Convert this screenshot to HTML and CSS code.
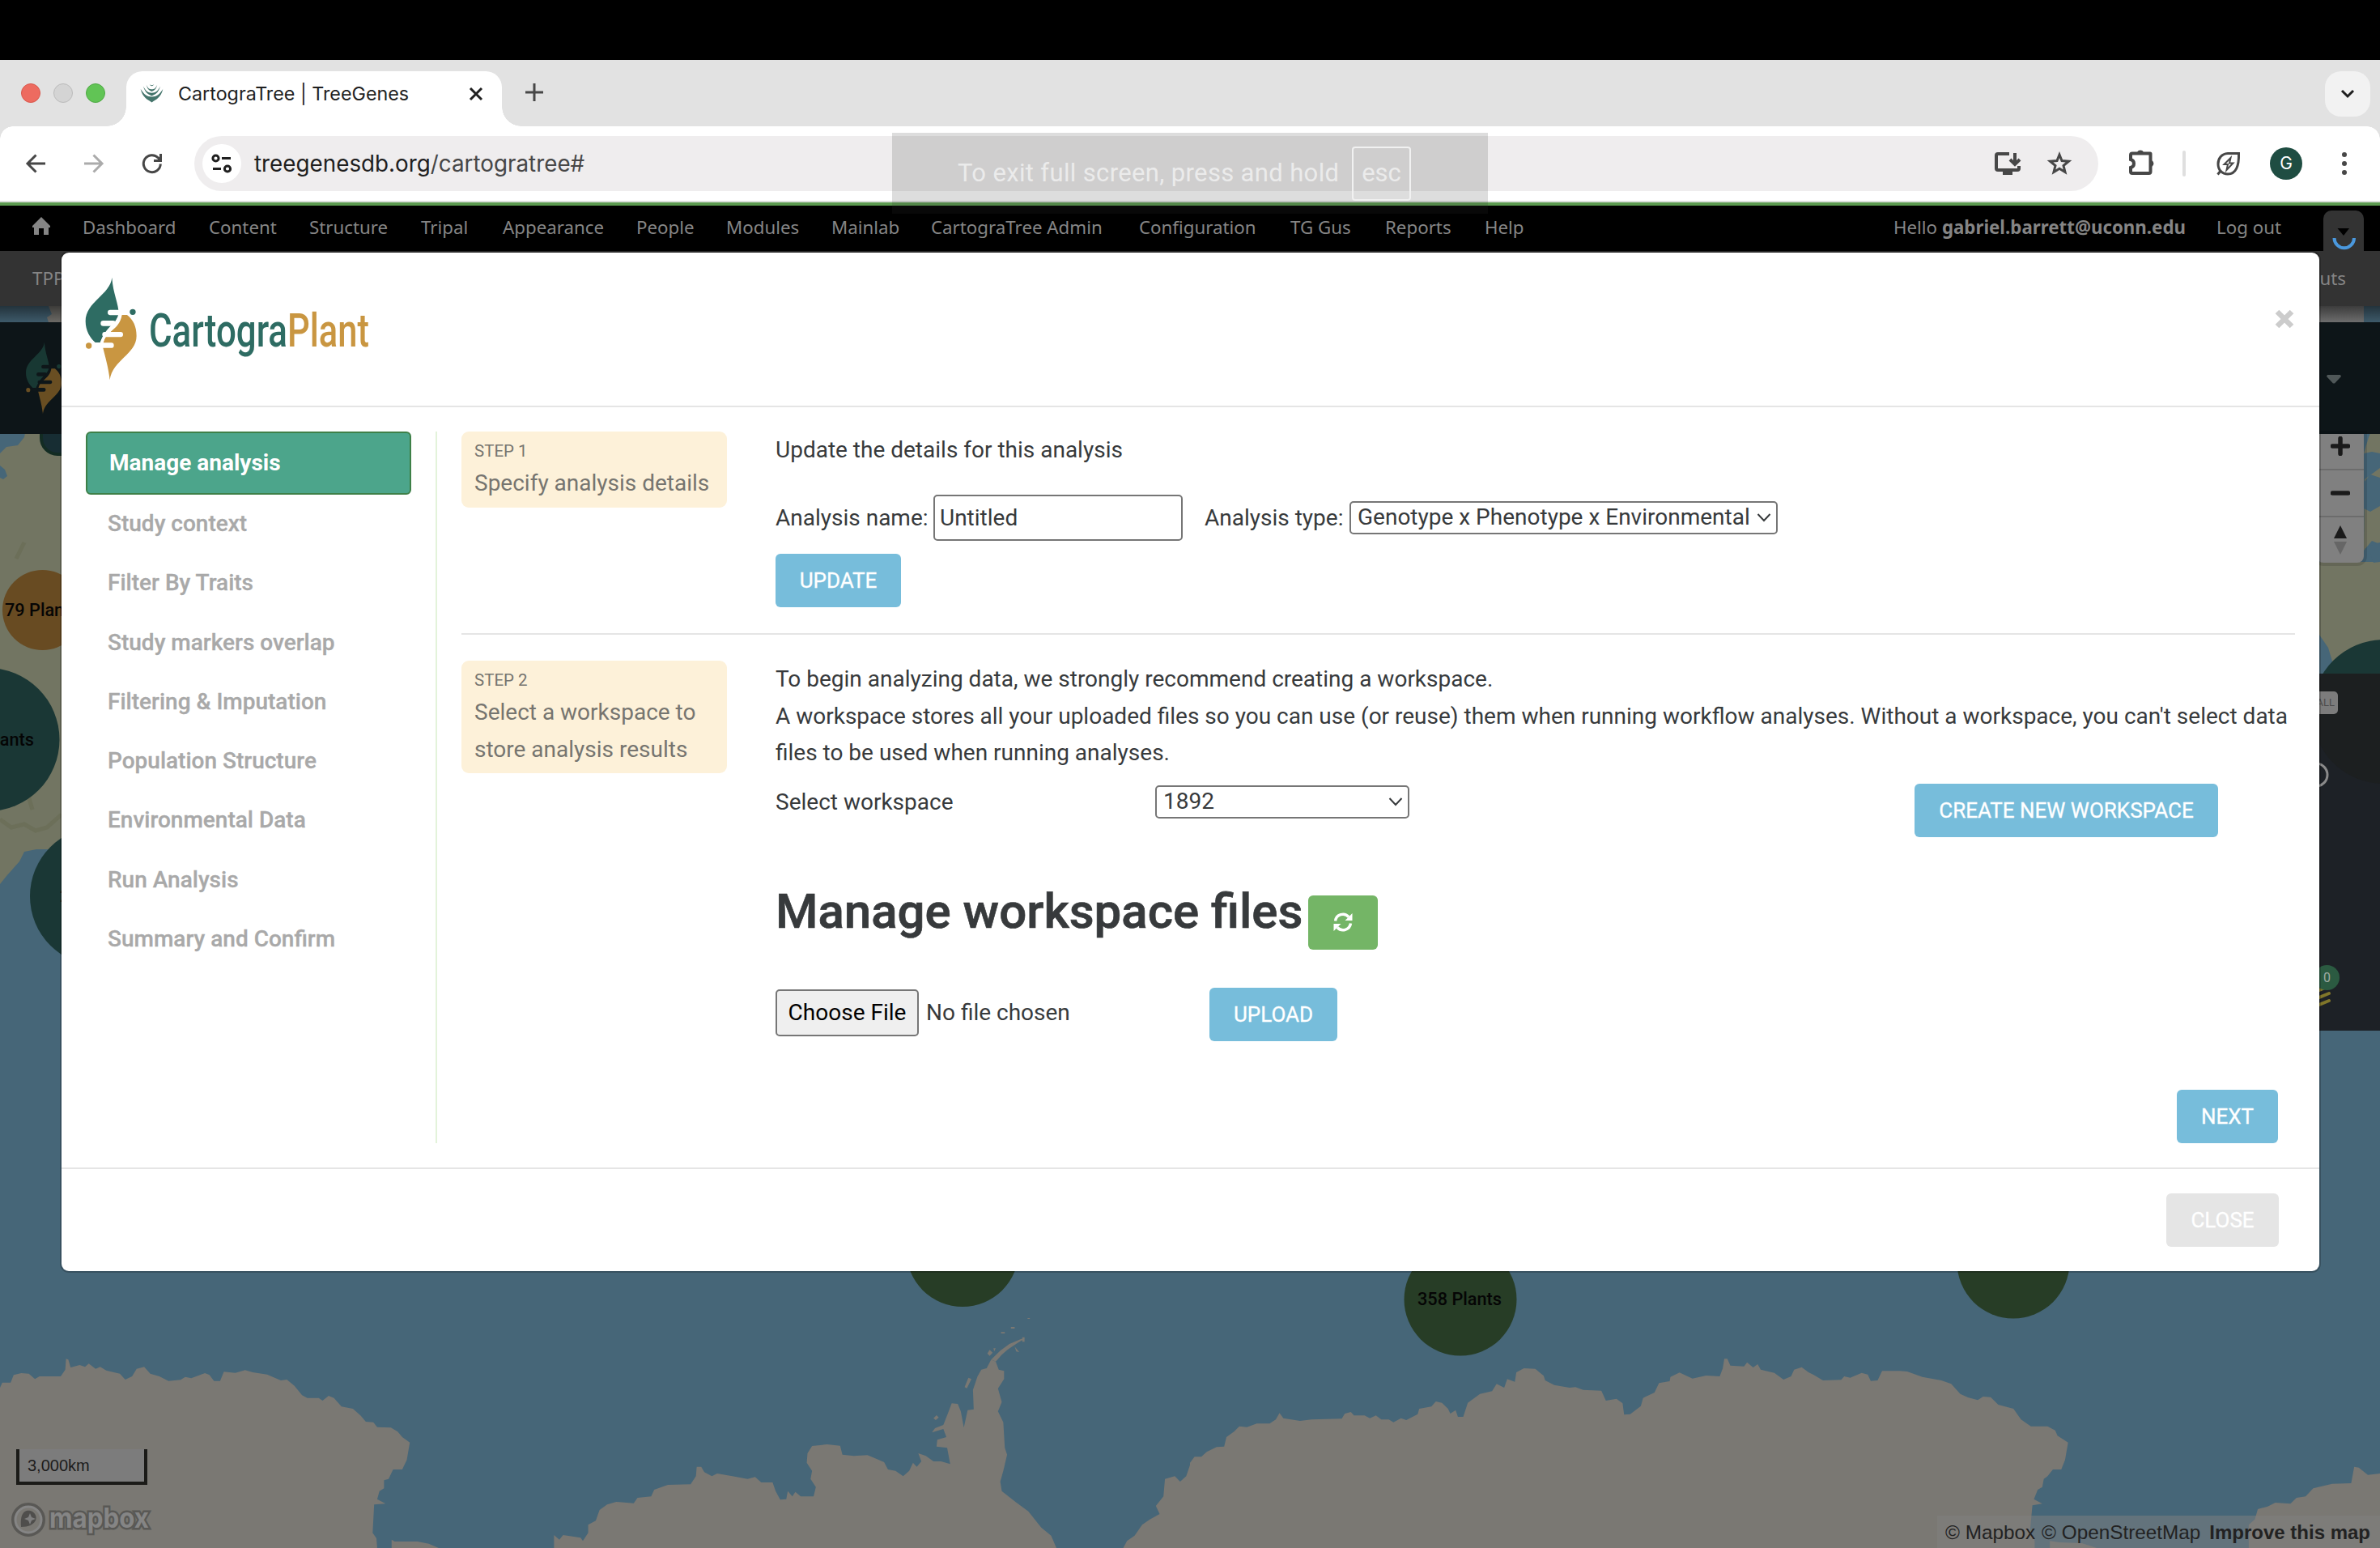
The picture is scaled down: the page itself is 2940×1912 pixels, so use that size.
FILE: index.html
```html
<!DOCTYPE html>
<html lang="en">
<head>
<meta charset="utf-8">
<title>CartograTree | TreeGenes</title>
<link rel="stylesheet" href="styles.css">
</head>
<body>
<svg class="defs" width="0" height="0">
  <symbol id="leaf" viewBox="70 30 205 400">
    <path class="leaf-top" d="M176 38C170 102 78 128 78 200C78 235 95 262 114 279H132C140 258 150 240 170 219C184 208 194 194 202 178C200 130 180 100 176 38Z"/>
    <path class="leaf-bottom" d="M213 177H232C255 195 267 220 267 255C267 322 178 344 168 418C163 370 150 330 143 299C142 275 150 256 170 240C195 220 208 205 213 177Z"/>
    <g class="leaf-cut">
      <rect x="160" y="158" width="55" height="19.500" rx="9.500"/>
      <rect x="134" y="198" width="56" height="20.500" rx="10"/>
      <rect x="140" y="240" width="77" height="18.500" rx="9"/>
      <rect x="114" y="280" width="69" height="19.500" rx="9.500"/>
      <path d="M206 170Q200 200 172 232Q140 255 135 296" fill="none" stroke="currentColor" stroke-width="9"/>
    </g>
    <circle class="leaf-top" cx="253" cy="166" r="11"/>
    <circle class="leaf-bottom" cx="90" cy="291" r="11"/>
  </symbol>
</svg>

<div class="screen">
  <div class="menubar"></div>

  <div class="tabstrip">
    <div class="lights"><i class="red"></i><i class="grey"></i><i class="green"></i></div>
    <div class="tab">
      <svg class="favicon" viewBox="0 0 90 72"><path d="M2 20C16 42 26 50 45 50S74 42 88 20C80 54 62 60 45 72C28 60 10 54 2 20Z"/><path d="M12 10C24 30 30 35 45 35S66 30 78 10C68 40 58 40 45 47C32 40 22 40 12 10Z"/><path d="M24 4C32 20 36 21 45 21S58 20 66 4C60 26 54 24 45 30C36 24 30 26 24 4Z"/><path d="M36 2Q45 16 54 2Q45 10 36 2Z"/></svg>
      <span class="tab-title">CartograTree | TreeGenes</span>
      <svg class="tab-close" viewBox="0 0 18 18"><path d="M2 2L16 16M16 2L2 16"/></svg>
    </div>
    <svg class="new-tab" viewBox="0 0 22 22"><path d="M11 0V22M0 11H22"/></svg>
    <div class="tab-search"><svg viewBox="0 0 18 12"><path d="M2 2L9 9L16 2"/></svg></div>
  </div>

  <div class="toolbar">
    <svg class="tool" viewBox="0 0 24 24"><path d="M24 12H2M12.500 1.500L2 12L12.500 22.500"/></svg>
    <svg class="tool off" viewBox="0 0 24 24"><path d="M0 12H22M11.500 1.500L22 12L11.500 22.500"/></svg>
    <svg class="tool" viewBox="0 0 24 24"><path d="M22.300 12.500A10.500 10.500 0 1 1 19.500 5L22 8M22.500 0V8.500H14"/></svg>
    <div class="omnibox">
      <div class="site-chip"><svg viewBox="0 0 26 24"><circle cx="5.500" cy="5.500" r="3.600"/><path d="M13 5.500H24M2 18.500H12"/><circle cx="20" cy="18.500" r="3.600"/></svg></div>
      <span class="url">treegenesdb.org<span>/cartogratree#</span></span>
      <svg class="ic install" viewBox="0 0 32 29"><path d="M18 2H4Q2 2 2 4V20Q2 22 4 22H28Q30 22 30 20V17"/><path d="M10 25H22" stroke-width="6"/><path d="M25 1V14M19 9L25 15L31 9"/></svg>
      <svg class="ic star" viewBox="0 0 30 30"><path d="M15 4L18 11.500L26.500 12.200L20 17.500L22 25.500L15 21.200L8 25.500L10 17.500L3.500 12.200L12 11.500Z"/></svg>
    </div>
    <svg class="ic puzzle" viewBox="0 0 32 32"><path d="M4 5.500H26Q26.500 5.500 26.500 6V28Q26.500 30 24.500 30H4Q2 30 2 28V23Q6 22 6 18T2 13V7.500Q2 5.500 4 5.500Z"/><path class="solid" d="M10 4A4.500 4.500 0 0 1 18 4ZM28 14A4.500 4.500 0 0 1 28 22Z"/></svg>
    <div class="sep"></div>
    <svg class="ic saver" viewBox="0 0 30 30"><path d="M27.500 2.500H14C6 3 2 9 2 15.500C2 23 7 28 14 28C24 28 28 18 27.500 2.500ZM6 23L1.500 28.500"/><path d="M17.500 8L9.500 16H14L12.500 23L20.500 14.500H16Z" stroke-width="2"/></svg>
    <div class="avatar">G</div>
    <div class="dots"><i></i><i></i><i></i></div>
  </div>

  <div class="page">
    <svg class="map" viewBox="0 254 2940 1658" width="2940" height="1658">
      <rect class="sea" y="254" width="2940" height="1658"/>
      <path class="green-land" d="M0 560L8 552L22 550L30 540L32 530H76V1049H45L30 1052L24 1064L8 1082L0 1092Z"/>
      <path class="sea" d="M0 575L6 580L9 588L4 592L0 590Z"/>
      <path class="ridge" d="M0 1012L14 1022L30 1018L44 1026L58 1022L76 1006M6 905Q20 930 40 1000M20 690L30 670"/>
      <path class="grey-land" d="M60 378L64 388L58 392L60 398H76V378Z"/>
      <path class="green-land" d="M2920 560L2926 540L2930 530H2940V560L2930 558ZM2921 592L2940 578V672L2930 668L2920 680ZM2865 694H2940V820H2882L2876 800L2865 784Z"/>
      <path class="sea" d="M2920 596L2928 586L2940 590V625L2928 632L2920 628ZM2921 678L2932 672L2940 670V694L2932 695L2928 684Z"/>
      <g class="grey-land">
        <g transform="translate(0 1540) scale(.9375 .33333)">
          <path d="M0 522L3 503 14 503 18 475 28 468 38 470 46 490 52 480 80 480 86 455 87 415 90 418 93 447 105 438 112 445 117 433 126 452 132 445 140 458 158 470 165 492 174 480 180 452 190 445 198 470 210 480 222 497 238 493 244 482 252 487 270 468 276 475 282 497 290 497 295 463 310 467 323 457 333 465 352 473 370 495 378 492 388 515 398 550 405 560 420 560 425 570 433 552 440 560 450 592 465 600 475 625 482 648 492 650 497 668 515 670 524 685 530 705 540 725 536 790 530 825 518 825 512 860 506 865 506 895 500 905 497 935 508 952 493 955 491 1060 496 1080 497 1116 0 1116Z"/>
          <path d="M516 1085L520 1092 550 1092 565 1100 578 1116 516 1116Z"/>
          <path d="M730 1116V1068L737 1085 742 1068 765 1078 768 1090 775 1060 775 1030 785 1015 790 975 800 955 812 945 835 950 840 930 858 925 862 900 880 882 910 880 917 850 918 815 924 815 928 835 938 850 945 840 965 850 985 860 995 853 1003 873 1018 873 1022 905 1028 937 1036 935 1038 905 1044 925 1048 908 1055 925 1072 925 1075 890 1068 860 1070 830 1063 800 1064 765 1070 738 1090 732 1107 737 1110 770 1125 775 1143 772 1152 782 1165 798 1170 825 1180 830 1190 850 1198 830 1203 800 1208 815 1214 795 1210 765 1220 775 1230 795 1240 795 1252 805 1248 745 1234 740 1235 715 1247 705 1243 675 1228 688 1232 672 1243 660 1250 610 1254 580 1262 582 1266 610 1270 670 1275 605 1283 602 1282 530 1288 480 1293 455 1300 450 1306 418 1312 425 1316 455 1323 460 1323 490 1315 525 1320 575 1315 610 1322 650 1324 745 1327 770 1322 830 1318 870 1320 905 1338 945 1355 980 1372 1040 1385 1070 1392 1116Z"/>
          <path d="M1306 418L1318 385 1330 360 1345 342 1351 338 1340 358 1328 380 1320 400 1312 425ZM1301 395L1304 382 1308 392 1304 404ZM1309 376L1312 376 1310 388ZM1337 370L1343 390 1339 388ZM1271 520L1276 485 1280 490 1274 524ZM1230 635L1234 624 1237 632 1233 642ZM1319 316H1324V321H1319ZM1332 297H1337V303H1332ZM1347 335H1350V352H1347ZM1354 264H1357V267H1354Z"/>
          <path d="M1480 1116L1485 1090 1495 1070 1505 1030 1515 1010 1528 990 1523 960 1533 925 1535 860 1548 850 1555 870 1563 850 1569 800V1116Z"/>
        </g>
        <g transform="translate(1470 1540) scale(.9375 .33333)">
          <path d="M0 1116V800L6 778 15 778 22 760 35 742 45 740 48 705 58 685 65 665 75 668 88 655 105 655 113 640 118 616 123 635 145 645 160 640 200 637 204 618 212 612 216 625 230 625 237 635 245 625 252 640 262 640 268 650 278 635 285 642 300 620 302 600 318 592 324 573 332 578 340 600 343 618 350 605 353 630 360 630 366 578 382 545 398 535 404 508 414 522 418 490 428 500 430 465 440 450 455 452 466 478 468 495 480 512 500 522 508 520 518 530 542 533 548 570 562 563 570 580 572 622 580 620 594 590 597 560 612 540 618 505 632 498 633 482 645 466 662 488 680 477 698 480 702 450 704 415 708 415 712 440 730 443 734 428 742 447 748 435 752 455 770 467 782 492 792 480 796 455 806 446 815 465 822 475 834 495 858 493 862 480 870 485 885 467 893 473 897 497 906 495 912 460 935 460 945 462 965 482 990 495 1003 508 1015 545 1025 558 1038 568 1045 555 1055 557 1065 585 1085 600 1095 640 1108 665 1130 665 1140 680 1143 700 1157 725 1153 790 1148 825 1137 825 1130 850 1125 860 1123 890 1117 900 1112 935 1123 952 1110 958 1107 1050 1113 1090 1113 1116Z"/>
          <path d="M1395 1116V1030L1403 1010 1407 972 1420 962 1430 948 1450 952 1458 930 1470 925 1480 895 1505 878 1530 876 1534 815 1540 818 1552 845 1568 840V1116ZM1133 1090L1145 1095 1175 1098 1195 1116H1133Z"/>
        </g>
      </g>
      <g class="pin-green"><circle cx="1189" cy="1544.500" r="69.500"/><circle cx="1804" cy="1605" r="69.500"/><circle cx="2487" cy="1559" r="69.500"/></g>
      <circle class="pin-gold" cx="52.500" cy="753.500" r="49.500"/>
      <g class="pin-teal"><circle cx="-15" cy="913.500" r="88.500"/><circle cx="123" cy="1107" r="86"/><circle cx="2945" cy="879" r="89"/></g>
      <rect class="pin-box" x="51" y="500" width="80" height="61" rx="20"/>
      <g class="pin-label"><text x="6" y="761">79 Plants</text><text x="42" y="921" text-anchor="end">254 Plants</text><text x="74" y="1114">2k</text><text x="1803" y="1612" text-anchor="middle">358 Plants</text></g>
    </svg>

    <div class="admin">
      <svg class="home" viewBox="0 0 22 22"><path d="M11 0L22 11V13H20V22H14V14H8V22H2V13H0V11Z"/></svg>
      <div class="admin-menu"><span>Dashboard</span><span>Content</span><span>Structure</span><span>Tripal</span><span>Appearance</span><span>People</span><span>Modules</span><span>Mainlab</span><span>CartograTree Admin</span><span>Configuration</span><span>TG Gus</span><span>Reports</span><span>Help</span></div>
      <div class="user"><span>Hello <b>gabriel.barrett@uconn.edu</b></span><span>Log out</span></div>
      <div class="drawer"><svg viewBox="0 0 50 50"><path d="M17.500 22H32L25 31Z" fill="#000"/><path d="M13.500 34A12.200 12.200 0 0 0 38 34" fill="none" stroke="#4a98dd" stroke-width="4"/></svg></div>
    </div>
    <div class="shortcuts"><span>TPPS</span><span>Edit shortcuts</span></div>
    <div class="strip"><i></i></div>
    <div class="sitenav">
      <svg class="nav-logo"><use href="#leaf"/></svg>
      <svg class="caret" viewBox="0 0 18 11"><path d="M1 0H17L18 2L10 10.500H8L0 2Z"/></svg>
    </div>

    <div class="zoomer"><div><svg viewBox="0 0 24 24"><path d="M12 2.500V21.500M2.500 12H21.500"/></svg></div><div><svg viewBox="0 0 24 24"><path d="M2.500 12H21.500"/></svg></div><div><svg class="compass" viewBox="0 0 16 36"><path d="M8 0L16 16H0Z" fill="#1a1a1a"/><path d="M0 20H16L8 36Z" fill="#666"/></svg></div></div>
    <div class="side-panel"><div class="all">ALL</div><svg class="side-art" viewBox="0 0 75 441"><circle cx="80" cy="47" r="89" fill="#1c1f20"/><circle cx="-4" cy="125" r="14" fill="none" stroke="#8a8a8a" stroke-width="3"/><path d="M0 391L12 386M0 400L12 395M0 409L12 404" stroke="#80762a" stroke-width="4" stroke-linecap="round"/></svg><div class="count">0</div></div>

    <div class="scale">3,000km</div>
    <svg class="mapbox" viewBox="0 0 180 44"><circle cx="21" cy="22" r="19" fill="none" stroke="#595855" stroke-width="4"/><circle cx="21" cy="22" r="16" fill="none" stroke="#858585" stroke-width="3"/><path d="M12 31C10 10 20 9 26 12C35 18 31 31 12 31Z" fill="#4f4e4c"/><path d="M23 14L25 19L30 21L25 23L23 28L21 23L16 21L21 19Z" fill="#7f7f7f"/><text x="47" y="32" textLength="123" lengthAdjust="spacingAndGlyphs">mapbox</text></svg>
    <div class="attribution"><span>© Mapbox</span> <span>© OpenStreetMap</span> <b>Improve this map</b></div>

    <div class="modal">
      <div class="modal-head">
        <div class="brand">
          <svg class="brand-leaf"><use href="#leaf"/></svg>
          <svg class="brand-name" viewBox="0 0 280 70"><text x="0" y="50" textLength="171" lengthAdjust="spacingAndGlyphs" fill="#2e6c63">Cartogra</text><text x="171" y="50" textLength="101" lengthAdjust="spacingAndGlyphs" fill="#c99641">Plant</text></svg>
        </div>
        <svg class="close-x" viewBox="0 0 24 24"><path d="M3 3L21 21M21 3L3 21"/></svg>
      </div>
      <div class="modal-body">
        <div class="steps">
          <div class="active">Manage analysis</div>
          <div>Study context</div><div>Filter By Traits</div><div>Study markers overlap</div><div>Filtering &amp; Imputation</div><div>Population Structure</div><div>Environmental Data</div><div>Run Analysis</div><div>Summary and Confirm</div>
        </div>
        <div class="content">
          <div class="row first">
            <div class="card"><small>STEP 1</small>Specify analysis details</div>
            <div>
              <p>Update the details for this analysis</p>
              <div class="form"><span>Analysis name:</span><div class="input">Untitled</div><span class="type">Analysis type:</span><div class="select wide"><span>Genotype x Phenotype x Environmental</span><svg viewBox="0 0 18 12"><path d="M1.500 2L9 10L16.500 2"/></svg></div></div>
              <div class="btn update">UPDATE</div>
            </div>
          </div>
          <div class="row second">
            <div class="card"><small>STEP 2</small>Select a workspace to<br>store analysis results</div>
            <div>
              <p>To begin analyzing data, we strongly recommend creating a workspace.<br>A workspace stores all your uploaded files so you can use (or reuse) them when running workflow analyses. Without a workspace, you can't select data<br>files to be used when running analyses.</p>
              <div class="pick"><span>Select workspace</span><div class="select"><span>1892</span><svg viewBox="0 0 18 12"><path d="M1.500 2L9 10L16.500 2"/></svg></div><div class="btn create">CREATE NEW WORKSPACE</div></div>
              <div class="files"><h1>Manage workspace files</h1><div class="btn refresh"><svg viewBox="0 0 24 24"><path d="M2.500 10.500A9.500 9.500 0 0 1 19 5.500M21.500 13.500A9.500 9.500 0 0 1 5 18.500" fill="none" stroke="#fff" stroke-width="3.400"/><path d="M23.500 1V10H14.500ZM.5 23V14H9.500Z" fill="#fff"/></svg></div></div>
              <div class="upload"><div class="choose">Choose File</div><span>No file chosen</span><div class="btn">UPLOAD</div></div>
              <div class="next"><div class="btn">NEXT</div></div>
            </div>
          </div>
        </div>
      </div>
      <div class="modal-foot"><div class="btn disabled">CLOSE</div></div>
    </div>
  </div>

  <div class="toast"><span>To exit full screen, press and hold</span><kbd>esc</kbd></div>
</div>
</body>
</html>
```
FILE: styles.css
```css
* { box-sizing: border-box; }
body { margin: 0; background: #000; }
svg { display: block; flex: none; }
.defs { position: absolute; }
.screen { position: relative; width: 2940px; height: 1912px; overflow: hidden; display: flex; flex-direction: column; font-family: Inter, "Liberation Sans", sans-serif; }
.menubar { height: 74px; background: #000; }

/* browser chrome */
.tabstrip { height: 82px; background: #e2e2e2; display: flex; padding: 14px 12px 0 26px; }
.lights { display: flex; gap: 16px; margin-top: 15px; width: 130px; }
.lights i { width: 24px; height: 24px; border-radius: 50%; border: 1px solid #d9574c; background: #ed6b60; }
.lights .grey { background: #d4d4d4; border-color: #bbb; }
.lights .green { background: #61c455; border-color: #4fa945; }
.tab { position: relative; width: 464px; height: 68px; background: #fff; border-radius: 20px 20px 0 0; display: flex; align-items: flex-start; padding: 14px 23px 0 17px; }
.tab::before, .tab::after { content: ""; position: absolute; bottom: 0; width: 24px; height: 24px; }
.tab::before { left: -24px; background: radial-gradient(circle at 0 0, transparent 23.5px, #fff 24px); }
.tab::after { right: -24px; background: radial-gradient(circle at 100% 0, transparent 23.5px, #fff 24px); }
.favicon { width: 29px; height: 24px; margin-top: 1px; fill: #45756c; }
.tab-title { font-size: 23.300px; line-height: 28px; margin-left: 18px; color: #1f1f1f; white-space: nowrap; }
.tab-close { width: 18px; height: 18px; margin: 5px 0 0 auto; }
.tab-close path, .tab-search path { fill: none; stroke: #1f1f1f; stroke-width: 3; }
.new-tab { width: 22px; height: 22px; margin: 15px 0 0 29px; }
.new-tab path { stroke: #474747; stroke-width: 3; }
.tab-search { width: 56px; height: 56px; margin-left: auto; background: #f2f2f2; border-radius: 20px; display: grid; place-items: center; }
.tab-search svg { width: 18px; height: 12px; }
.toolbar { height: 94px; background: linear-gradient(#fff, #fff) 0 0 / 100% 92px no-repeat, #dcdfdc; display: flex; align-items: center; padding: 0 36px 2px 32px; position: relative; }
.toolbar::before, .toolbar::after { content: ""; position: absolute; top: 0; width: 16px; height: 16px; }
.toolbar::before { left: 0; background: radial-gradient(circle at 100% 100%, #fff 15.5px, #e2e2e2 16px); }
.toolbar::after { right: 0; background: radial-gradient(circle at 0 100%, #fff 15.5px, #e2e2e2 16px); }
.tool { width: 24px; height: 24px; margin-right: 48px; fill: none; stroke: #474747; stroke-width: 3; overflow: visible; }
.tool.off { stroke: #ababab; }
.tool:nth-child(3) { margin-right: 40px; }
.omnibox { width: 2352px; height: 68px; border-radius: 34px; background: #efedee; display: flex; align-items: center; padding: 0 33px 0 10px; }
.site-chip { width: 48px; height: 48px; border-radius: 50%; background: #fff; display: grid; place-items: center; }
.site-chip svg { width: 26px; height: 24px; fill: none; stroke: #1f1f1f; stroke-width: 3; }
.url { font-size: 27.800px; margin-left: 16px; color: #1f1f1f; margin-right: auto; }
.url span { color: #474747; }
.ic { fill: none; stroke: #474747; stroke-width: 4; overflow: visible; }
.ic .solid { fill: #474747; stroke: none; }
.install { width: 32px; height: 29px; margin-right: 33px; }
.star { width: 30px; height: 30px; stroke-width: 3; }
.puzzle { width: 32px; height: 32px; margin: 0 34px 0 38px; position: relative; top: -2px; }
.sep { width: 4px; height: 32px; border-radius: 2px; background: #dfdfdf; margin-right: 38px; }
.saver { width: 30px; height: 30px; margin-right: 36px; stroke-width: 3; }
.avatar { width: 40px; height: 40px; border-radius: 50%; background: #1f4d42; color: #fff; font-size: 21px; line-height: 40px; text-align: center; margin-right: 49px; }
.dots { display: flex; flex-direction: column; gap: 5px; }
.dots i { width: 6px; height: 6px; border-radius: 50%; background: #474747; }

.toast { position: absolute; left: 1102px; top: 164px; width: 736px; height: 100px; background: rgba(50, 50, 50, .165); color: #ebebeb; display: flex; align-items: center; padding: 0 0 0 81px; font: 31px Roboto, sans-serif; white-space: nowrap; }
.toast span { width: 487px; letter-spacing: .35px; margin-top: -2px; }
.toast kbd { width: 73px; height: 67px; border: 2px solid #f1f1f1; border-radius: 4px; font: 31px/62px Roboto, sans-serif; text-align: center; }

/* page behind the dialog */
.page { position: relative; flex: 1; overflow: hidden; border-top: 4px solid #5c9a50; color: #858585; }
.map { position: absolute; left: 0; top: 0; }
.sea { fill: #466678; }
.green-land { fill: #727562; }
.grey-land { fill: #7a7873; }
.ridge { fill: none; stroke: #65694f; stroke-width: 5; opacity: .5; }
.pin-green { fill: #273d26; }
.pin-gold { fill: #684b22; }
.pin-teal { fill: #1a3735; }
.pin-box { fill: #172d33; stroke: #132c23; stroke-width: 4; }
.pin-label { font: 500 21.700px Roboto, sans-serif; fill: #050505; }
.admin { position: relative; height: 56px; background: #000; display: flex; padding-left: 40px; font: 22.300px/53px "Noto Sans", sans-serif; white-space: nowrap; }
.home { width: 22px; height: 22px; fill: #858585; margin-top: 14px; }
.admin-menu { margin-left: 40px; display: grid; grid-template-columns: 156px 124px 138px 101px 165px 111px 130px 123px 257px 187px 117px 123px 80px; }
.user { display: grid; grid-template-columns: 399px 90px; margin-left: auto; }
.drawer { width: 50px; height: 50px; margin: 6px 20px 0 42px; background: #333; border-radius: 10px 10px 0 0; }
.shortcuts { position: relative; height: 68px; background: #333; display: flex; justify-content: space-between; padding: 0 42px 0 40px; font: 22.300px/68px "Noto Sans", sans-serif; }
.strip { position: relative; height: 20px; background: linear-gradient(rgba(0,0,0,.5), rgba(0,0,0,.12)); }
.strip i { display: block; width: 60px; height: 20px; margin-left: 2860px; background: linear-gradient(#3c3c3c, #6d6d6d); }
.sitenav { position: relative; height: 138px; background: #0d1518; color: #0d1518; display: flex; justify-content: space-between; padding: 23px 48px 0 30px; }
.nav-logo { width: 48px; height: 93px; overflow: visible; color: #1a2a30; filter: brightness(.52); }
.leaf-top { fill: #2e6c63; }
.leaf-bottom { fill: #c99641; }
.leaf-cut { fill: currentColor; }
.caret { width: 18px; height: 11px; margin-top: 42px; fill: #4f5758; }
.zoomer { position: absolute; left: 2862px; top: 282px; width: 58px; height: 159px; background: #808080; border-radius: 0 0 8px 8px; box-shadow: 0 0 0 4px rgba(0,0,0,.12); }
.zoomer div { height: 58px; border-bottom: 2px solid #6c6c6c; display: grid; place-items: center; }
.zoomer div:first-child { height: 45px; padding-bottom: 14px; }
.zoomer div:last-child { height: 56px; border: 0; }
.zoomer svg { width: 24px; height: 24px; stroke: #1a1a1a; stroke-width: 5.500; stroke-linecap: round; }
.zoomer .compass { width: 16px; height: 36px; stroke: none; }
.side-panel { position: absolute; left: 2865px; top: 578px; width: 75px; height: 441px; background: #1d2126; overflow: hidden; }
.side-art { width: 75px; height: 441px; }
.all { position: absolute; left: -22px; top: 22px; width: 45px; height: 28px; border-radius: 5px; background: #7c7c7c; color: #4d4d4d; font: 13px/28px Roboto, sans-serif; text-align: right; padding-right: 4px; }
.count { position: absolute; left: -6px; top: 360px; width: 31px; height: 31px; border-radius: 50%; background: #2b5a41; color: #a0aaa2; font: 16px/32px Roboto, sans-serif; text-align: center; }
.scale { position: absolute; left: 20px; top: 1536px; width: 162px; height: 44px; border: 4px solid #1b1b18; border-top: 0; background: #7c7c7c; color: #1c1c1c; font: 20px/40px "Liberation Sans", sans-serif; padding-left: 10px; }
.mapbox { position: absolute; left: 14px; top: 1601px; width: 180px; height: 44px; }
.mapbox text { font: 700 34px Inter, sans-serif; fill: #858585; stroke: #595855; stroke-width: 5; paint-order: stroke; }
.attribution { position: absolute; right: 0; bottom: 0; width: 547px; height: 40px; background: rgba(128, 128, 128, .5); color: #222; font: 24.300px/42px "Liberation Sans", sans-serif; padding-left: 10px; white-space: nowrap; display: flex; gap: 8px; }
.attribution b { margin-left: 3px; font-size: 24px; }

/* dialog */
.modal { position: absolute; left: 76px; top: 58px; width: 2789px; height: 1258px; background: #fff; border-radius: 9px; box-shadow: 0 0 0 2px rgba(0, 0, 0, .2); color: #373a3c; font: 28px/45.600px Roboto, sans-serif; display: flex; flex-direction: column; }
.modal-head { height: 191px; border-bottom: 2px solid #e5e5e5; display: flex; justify-content: space-between; padding: 28px 31px 0 27px; color: #fff; }
.brand { display: flex; }
.brand-leaf { width: 68.300px; height: 133.300px; }
.brand-name { width: 280px; height: 70px; margin: 38px 0 0 13px; }
.brand-name text { font: 500 57px Roboto, sans-serif; }
.close-x { width: 24px; height: 24px; margin-top: 42px; }
.close-x path { stroke: #ccc; stroke-width: 6.500; }
.modal-body { height: 939px; padding: 30px; display: flex; }
.steps { width: 434px; border-right: 2px solid #e3f3da; padding-right: 30px; color: #a9a9a9; font-weight: 500; -webkit-text-stroke: .3px; }
.steps div { height: 73.300px; line-height: 72px; padding-left: 27px; }
.steps .active { width: 402px; height: 78px; line-height: 74px; background: #4ca58b; border: 2px solid #3e8048; border-radius: 6px; color: #fff; font-weight: 700; -webkit-text-stroke: 0; }
.content { flex: 1; margin-left: 30px; }
.row { display: grid; grid-template-columns: 328px 1fr; column-gap: 60px; align-items: start; }
.first { height: 251px; border-bottom: 2px solid #e5e5e5; }
.second { padding-top: 32px; }
.card { background: #fdf1d9; border-radius: 9px; padding: 8px 0 7px 16px; color: #767570; white-space: nowrap; }
.card small { display: block; font-size: 20.500px; line-height: 33px; }
p { margin: 0; white-space: nowrap; }
.form { display: flex; align-items: center; height: 57px; margin-top: 32px; white-space: nowrap; }
.form > span { width: 195px; padding-top: 1px; }
.form > .type { width: 179px; margin-left: 27px; }
.input { width: 308px; height: 57px; border: 2px solid #767676; border-radius: 5px; padding-left: 6px; line-height: 53px; }
.select { width: 314px; height: 41px; border: 2px solid #767676; border-radius: 5px; display: flex; align-items: center; justify-content: space-between; padding: 0 6px 0 8px; line-height: 38px; }
.select.wide { width: 529px; }
.select svg { width: 18px; height: 12px; }
.select path { fill: none; stroke: #373a3c; stroke-width: 2; }
.btn { width: 158px; height: 66px; border-radius: 6px; background: #77bddb; color: #fff; font-size: 26px; line-height: 66px; text-align: center; white-space: nowrap; -webkit-text-stroke: .3px; }
.update { width: 155px; margin-top: 16px; }
.pick { display: flex; align-items: flex-start; margin-top: 15px; height: 66px; }
.pick > span { width: 469px; }
.pick > .select { margin-top: 2px; }
.create { width: 375px; margin-left: 624px; }
.files { display: flex; align-items: flex-start; margin-top: 54px; }
h1 { margin: 0; width: 658px; white-space: nowrap; font-size: 60px; font-weight: 500; line-height: 76px; -webkit-text-stroke: .7px; }
.refresh { width: 86px; height: 67px; margin-top: 18px; background: #74b566; display: grid; place-items: center; }
.refresh svg { width: 24px; height: 24px; }
.upload { display: flex; align-items: flex-start; margin-top: 47px; height: 66px; }
.choose { width: 177px; height: 58px; margin-top: 2px; border: 2px solid #767676; border-radius: 5px; background: #efefef; color: #000; text-align: center; line-height: 54px; }
.upload span { width: 350px; margin: 8px 0 0 9px; }
.next { margin: 60px 21px 0 0; display: flex; justify-content: flex-end; }
.next .btn { width: 125px; }
.modal-foot { flex: 1; border-top: 2px solid #e5e5e5; padding: 30px 50px 0; display: flex; justify-content: flex-end; }
.disabled { width: 139px; background: #e5e5e5; }
```
